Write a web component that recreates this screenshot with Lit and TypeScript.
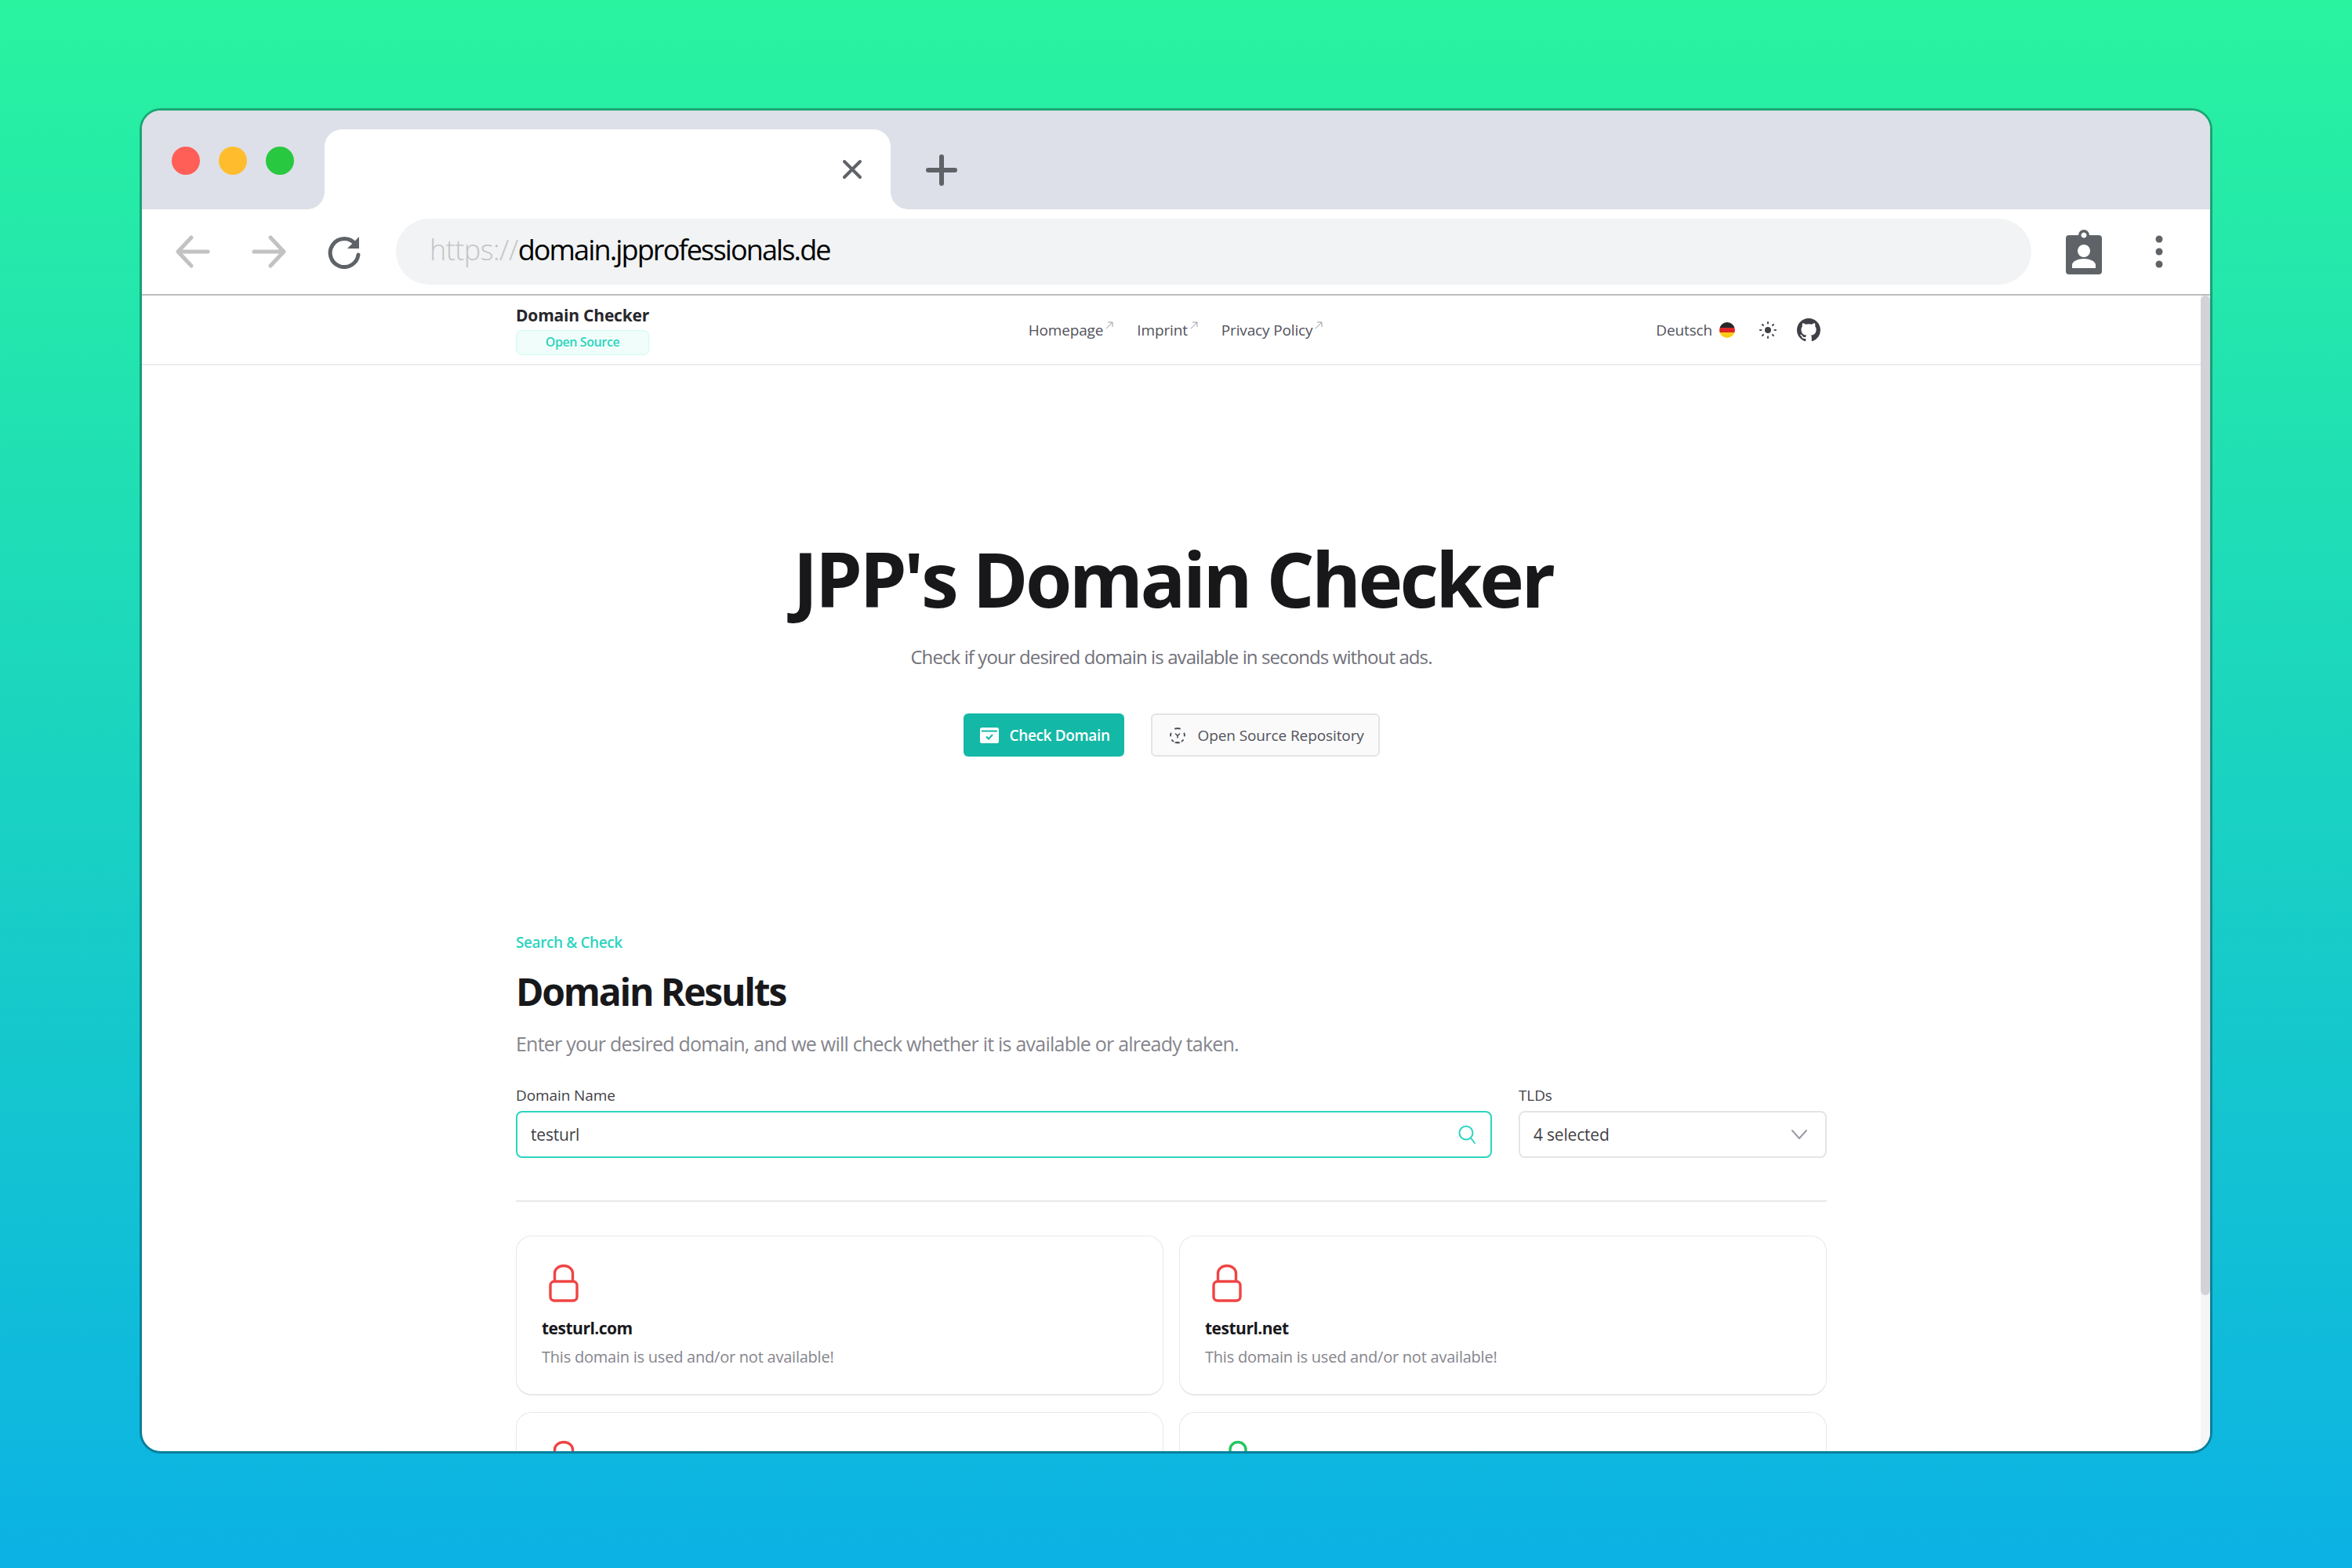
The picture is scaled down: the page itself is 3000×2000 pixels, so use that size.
import { LitElement, html, css, svg } from 'lit';
import { customElement } from 'lit/decorators.js';

const lock = (color: string, open = false) => html`
  <svg class="lock" viewBox="0 0 38 48" fill="none" stroke=${color} stroke-width="3.4">
    ${open
      ? svg`<path d="M23 22V11a10 9.500 0 0 1 20 0V14" />`
      : svg`<path d="M7.500 22V11a11.500 9.500 0 0 1 23 0V22" />`}
    <rect x="2" y="21.500" width="34" height="24.500" rx="5" />
  </svg>
`;

@customElement('domain-card')
export class DomainCard extends LitElement {
  static properties = {
    name: { type: String },
    color: { type: String },
    open: { type: Boolean },
    text: { type: String },
  };

  name = '';
  color = '#ef4444';
  open = false;
  text = '';

  static styles = css`
    :host {
      display: block;
      box-sizing: border-box;
      height: 204px;
      padding: 36px 32px 0;
      background: #fff;
      border: 1px solid #e8e8ea;
      border-bottom-width: 2px;
      border-radius: 20px;
    }
    .lock {
      display: block;
      width: 38px;
      height: 48px;
      margin-left: 9px;
      overflow: visible;
    }
    .name {
      margin-top: 18px;
      font-size: 21px;
      line-height: 30px;
      font-weight: 700;
      letter-spacing: -0.5px;
      color: #18181b;
    }
    .text {
      margin-top: 8px;
      font-size: 20px;
      line-height: 28px;
      letter-spacing: -0.23px;
      color: #85858d;
    }
  `;

  render() {
    return html`
      ${lock(this.color, this.open)}
      ${this.name
        ? html`<div class="name">${this.name}</div>
            <div class="text">${this.text}</div>`
        : ''}
    `;
  }
}

@customElement('app-root')
export class AppRoot extends LitElement {
  static styles = css`
    :host {
      display: block;
      box-sizing: border-box;
      width: 3000px;
      height: 2000px;
      padding: 138px 178px 146px;
      background: linear-gradient(180deg, #29f39f, #0bb2e4);
      font-family: 'Open Sans', 'Noto Sans', sans-serif;
    }
    .window {
      display: flex;
      flex-direction: column;
      box-sizing: border-box;
      height: 100%;
      overflow: hidden;
      background: #fff;
      border: 3px solid rgba(0, 0, 0, 0.3);
      border-radius: 27px;
      background-clip: padding-box;
    }
    .tabstrip {
      display: flex;
      align-items: flex-end;
      flex: none;
      height: 126px;
      background: #dde0e8;
    }
    .lights {
      display: flex;
      gap: 24px;
      width: 233px;
      box-sizing: border-box;
      padding: 0 0 44px 38px;
    }
    .lights i {
      width: 36px;
      height: 36px;
      border-radius: 50%;
    }
    .tab {
      position: relative;
      display: flex;
      align-items: center;
      justify-content: flex-end;
      box-sizing: border-box;
      width: 722px;
      height: 102px;
      padding: 0 34px 0 0;
      background: #fff;
      border-radius: 22px 22px 0 0;
    }
    /* concave corners where the tab meets the toolbar */
    .tab::before,
    .tab::after {
      content: '';
      position: absolute;
      bottom: 0;
      width: 22px;
      height: 22px;
    }
    .tab::before {
      left: -22px;
      background: radial-gradient(circle at 0 0, #dde0e8 21.500px, #fff 22px);
    }
    .tab::after {
      right: -22px;
      background: radial-gradient(circle at 100% 0, #dde0e8 21.500px, #fff 22px);
    }
    .tab svg {
      width: 30px;
      height: 30px;
    }
    .plus {
      width: 40px;
      height: 40px;
      margin: 0 0 30px 45px;
    }
    .toolbar {
      display: flex;
      align-items: center;
      flex: none;
      height: 110px;
      box-sizing: border-box;
      padding-left: 43px;
      border-bottom: 2px solid #bdbdbd;
    }
    .toolbar .nav {
      width: 44px;
      height: 44px;
      margin-right: 53px;
    }
    .url {
      display: flex;
      align-items: center;
      box-sizing: border-box;
      width: 2086px;
      height: 84px;
      margin-left: -10px;
      padding: 0 0 5px 43px;
      background: #f1f3f4;
      border-radius: 42px;
      font-size: 36px;
      letter-spacing: -1.86px;
      color: #000;
    }
    .url span {
      color: #c4c4c4;
      font-weight: 300;
      letter-spacing: -0.5px;
    }
    .badge-icon {
      width: 46px;
      height: 58px;
      margin-left: 44px;
    }
    .dots {
      width: 10px;
      height: 42px;
      margin-left: 68px;
    }
    .body {
      display: flex;
      flex: 1;
      min-height: 0;
    }
    .page {
      flex: 1;
      min-width: 0;
      overflow: hidden;
    }
    .scrollbar {
      flex: none;
      width: 12px;
      background: #f5f5f6;
    }
    .scrollbar i {
      display: block;
      height: 1275px;
      background: #d2d2d8;
      border-radius: 6px;
    }
    .topnav {
      box-sizing: border-box;
      height: 89px;
      border-bottom: 2px solid #ececee;
    }
    .wrap {
      width: 1672px;
      margin: 0 auto;
    }
    .topnav .wrap {
      display: grid;
      grid-template-columns: 1fr auto 1fr;
      align-items: center;
      height: 100%;
    }
    .brand {
      width: 170px;
    }
    .brand b {
      display: block;
      font-size: 21px;
      line-height: 28px;
      font-weight: 700;
      letter-spacing: -0.2px;
      white-space: nowrap;
      color: #27272a;
    }
    .brand span {
      display: block;
      height: 32px;
      box-sizing: border-box;
      margin-top: 5px;
      font-size: 16px;
      line-height: 29px;
      font-weight: 600;
      letter-spacing: -0.4px;
      text-align: center;
      color: #2dd4bf;
      background: #f0fdfa;
      border: 1.500px solid #ccfbf1;
      border-radius: 7px;
    }
    .links {
      display: flex;
      gap: 29px;
      padding-left: 12px;
      font-size: 19px;
      letter-spacing: -0.15px;
      color: #52525b;
    }
    .links span {
      display: flex;
      align-items: center;
      gap: 2px;
    }
    .links svg {
      width: 12px;
      height: 12px;
      margin-top: -12px;
    }
    .actions {
      display: flex;
      align-items: center;
      justify-content: flex-end;
      padding-right: 8px;
      font-size: 19px;
      letter-spacing: -0.15px;
      color: #52525b;
    }
    .flag {
      width: 20px;
      height: 20px;
      margin-left: 9px;
      border-radius: 50%;
      background: linear-gradient(#27272a 0 33%, #dc2626 33% 66%, #facc15 66%);
    }
    .sun {
      width: 24px;
      height: 24px;
      margin-left: 30px;
    }
    .gh {
      width: 30px;
      height: 30px;
      margin-left: 25px;
    }
    .hero {
      display: flex;
      flex-direction: column;
      align-items: center;
      padding-top: 212px;
      height: 723px;
      box-sizing: border-box;
    }
    h1 {
      margin: 0;
      padding-left: 4px;
      font-size: 96px;
      line-height: 120px;
      font-weight: 700;
      letter-spacing: -3.6px;
      color: #18181b;
    }
    .sub {
      margin-top: 23px;
      font-size: 24px;
      line-height: 34px;
      letter-spacing: -0.9px;
      color: #71717a;
    }
    .buttons {
      display: flex;
      gap: 34px;
      margin-top: 55px;
    }
    .btn {
      display: flex;
      align-items: center;
      box-sizing: border-box;
      height: 55px;
      font-size: 19px;
      font-weight: 600;
      letter-spacing: -0.35px;
      border-radius: 6px;
      white-space: nowrap;
    }
    .btn svg {
      width: 24px;
      height: 24px;
    }
    .primary {
      width: 205px;
      padding-left: 21px;
      gap: 14px;
      color: #fff;
      background: #14b8a6;
    }
    .secondary {
      width: 292px;
      padding-left: 20px;
      gap: 14px;
      font-weight: 500;
      letter-spacing: -0.1px;
      color: #52525b;
      background: #fafafa;
      border: 2px solid #e4e4e7;
    }
    .eyebrow {
      font-size: 19px;
      line-height: 26px;
      font-weight: 600;
      letter-spacing: -0.4px;
      color: #2dd4bf;
    }
    h2 {
      margin: 18px 0 0;
      font-size: 48px;
      line-height: 64px;
      font-weight: 700;
      letter-spacing: -2.2px;
      color: #18181b;
    }
    .lead {
      margin-top: 16px;
      font-size: 25px;
      line-height: 36px;
      letter-spacing: -0.77px;
      color: #85858d;
    }
    .form {
      display: grid;
      grid-template-columns: 1245px 393px;
      gap: 34px;
      margin-top: 35px;
      padding-bottom: 54px;
      border-bottom: 2px solid #e8e8ea;
    }
    label {
      display: block;
      margin-bottom: 7px;
      font-size: 19px;
      line-height: 26px;
      font-weight: 500;
      letter-spacing: -0.1px;
      color: #3f3f46;
    }
    .field {
      display: flex;
      align-items: center;
      justify-content: space-between;
      box-sizing: border-box;
      height: 60px;
      padding: 0 17px;
      font-size: 21px;
      letter-spacing: -0.2px;
      color: #3f3f46;
      border: 2px solid #e4e4e7;
      border-radius: 8px;
    }
    .field.active {
      border-color: #2dd4bf;
    }
    .field svg {
      width: 26px;
      height: 26px;
    }
    .cards {
      display: grid;
      grid-template-columns: 1fr 1fr;
      gap: 21px 20px;
      margin-top: 43px;
    }
  `;

  render() {
    const ext = html`<svg viewBox="0 0 12 12" fill="none" stroke="#9a9aa2" stroke-width="1"><path d="M2 10 10 2M4 2h6v6" /></svg>`;
    const msg = 'This domain is used and/or not available!';
    return html`
      <div class="window">
        <div class="tabstrip">
          <div class="lights">
            <i style="background:#ff5f57"></i>
            <i style="background:#ffbd2e"></i>
            <i style="background:#28c840"></i>
          </div>
          <div class="tab">
            <svg viewBox="0 0 30 30" fill="none" stroke="#5f6368" stroke-width="4" stroke-linecap="round"><path d="M5 5 25 25M25 5 5 25" /></svg>
          </div>
          <svg class="plus" viewBox="0 0 40 40" fill="none" stroke="#5f6368" stroke-width="6" stroke-linecap="round"><path d="M20 3V37M3 20H37" /></svg>
        </div>
        <div class="toolbar">
          <svg class="nav" viewBox="0 0 44 44" fill="none" stroke="#c2c2c2" stroke-width="5" stroke-linecap="round" stroke-linejoin="round"><path d="M41 22H4M20 4 3 22 20 40" /></svg>
          <svg class="nav" viewBox="0 0 44 44" fill="none" stroke="#c2c2c2" stroke-width="5" stroke-linecap="round" stroke-linejoin="round"><path d="M3 22H40M24 4 41 22 24 40" /></svg>
          <svg class="nav" viewBox="0 0 44 44" fill="none"><path d="M35 12A18 18 0 1 0 39 26" stroke="#5f6368" stroke-width="5" stroke-linecap="round" /><path d="M40 3V18H25Z" fill="#5f6368" /></svg>
          <div class="url"><span>https://</span>domain.jpprofessionals.de</div>
          <svg class="badge-icon" viewBox="0 0 46 58"><path fill="#5f6368" fill-rule="evenodd" d="M16 8a7 7 0 0 1 14 0h12a4 4 0 0 1 4 4v42a4 4 0 0 1-4 4H4a4 4 0 0 1-4-4V12a4 4 0 0 1 4-4ZM23 4.500a3.500 3.500 0 1 0 .01 0ZM23 20a8 8 0 1 0 .01 0ZM8 50h30v-4c0-5-8-8-15-8s-15 3-15 8Z" /></svg>
          <svg class="dots" viewBox="0 0 10 42" fill="#5f6368"><circle cx="5" cy="5" r="4.500" /><circle cx="5" cy="21" r="4.500" /><circle cx="5" cy="37" r="4.500" /></svg>
        </div>
        <div class="body">
          <div class="page">
            <div class="topnav">
              <div class="wrap">
                <div class="brand"><b>Domain Checker</b><span>Open Source</span></div>
                <div class="links">
                  <span>Homepage ${ext}</span>
                  <span>Imprint ${ext}</span>
                  <span>Privacy Policy ${ext}</span>
                </div>
                <div class="actions">
                  Deutsch<i class="flag"></i>
                  <svg class="sun" viewBox="0 0 24 24" fill="none" stroke="#52525b" stroke-width="2.200" stroke-linecap="round"><circle cx="12" cy="12" r="4" fill="#3f3f46" stroke="none" /><path d="M12 2v1.500M12 20.500V22M2 12h1.500M20.500 12H22M5 5l1 1M18 18l1 1M5 19l1-1M18 6l1-1" /></svg>
                  <svg class="gh" viewBox="0 0 16 16" fill="#3f3f46"><path d="M8 0C3.580 0 0 3.580 0 8c0 3.540 2.290 6.530 5.470 7.590.4.07.55-.17.55-.38 0-.19-.01-.82-.01-1.490-2.010.37-2.530-.49-2.690-.94-.09-.23-.48-.94-.82-1.130-.28-.15-.68-.52-.01-.53.63-.01 1.080.58 1.230.82.72 1.210 1.870.87 2.330.66.07-.52.28-.87.51-1.070-1.780-.2-3.640-.89-3.640-3.950 0-.87.31-1.590.82-2.150-.08-.2-.36-1.020.08-2.120 0 0 .67-.21 2.200.82.64-.18 1.320-.27 2-.27.68 0 1.360.09 2 .27 1.530-1.040 2.200-.82 2.200-.82.44 1.100.16 1.920.08 2.120.51.56.82 1.270.82 2.150 0 3.070-1.870 3.750-3.650 3.950.29.25.54.73.54 1.480 0 1.070-.01 1.930-.01 2.200 0 .21.15.46.55.38A8.013 8.013 0 0 0 16 8c0-4.420-3.580-8-8-8z" /></svg>
                </div>
              </div>
            </div>
            <div class="hero">
              <h1>JPP's Domain Checker</h1>
              <div class="sub">Check if your desired domain is available in seconds without ads.</div>
              <div class="buttons">
                <div class="btn primary">
                  <svg viewBox="0 0 24 24"><rect y="2" width="24" height="20" rx="2.500" fill="#fff" /><path d="M2 6.500H22" stroke="#14b8a6" stroke-width="2" /><path d="M8 13.500l3 3 5-5.500" fill="none" stroke="#14b8a6" stroke-width="2" /></svg>
                  Check Domain
                </div>
                <div class="btn secondary">
                  <svg viewBox="0 0 24 24" fill="none" stroke="#52525b" stroke-width="2" stroke-linecap="round"><path d="M9 3.500a9 9 0 0 1 6 0M3.500 9.500a9 9 0 0 0-.4 3M20.500 9.500a9 9 0 0 1 .4 3M5 18a9 9 0 0 0 1.500 1.500M19 18a9 9 0 0 1-1.500 1.500" /><path d="M9 21.500a9 9 0 0 0 6 0l-1-1h-4Z" fill="#52525b" stroke-width="1" /><path d="M9.500 10l2.500 2.500L14.500 10M12 12.500V15" stroke-width="1.600" /></svg>
                  Open Source Repository
                </div>
              </div>
            </div>
            <div class="wrap">
              <div class="eyebrow">Search &amp; Check</div>
              <h2>Domain Results</h2>
              <div class="lead">Enter your desired domain, and we will check whether it is available or already taken.</div>
              <div class="form">
                <div>
                  <label>Domain Name</label>
                  <div class="field active">testurl
                    <svg viewBox="0 0 26 26" fill="none" stroke="#2dd4bf" stroke-width="2" stroke-linecap="round"><circle cx="12" cy="11" r="8.500" /><path d="M18 17.500 23 24" /></svg>
                  </div>
                </div>
                <div>
                  <label>TLDs</label>
                  <div class="field">4 selected
                    <svg viewBox="0 0 26 26" fill="none" stroke="#9a9aa6" stroke-width="2" stroke-linecap="round" stroke-linejoin="round"><path d="M1 8l9 10 9-10" /></svg>
                  </div>
                </div>
              </div>
              <div class="cards">
                <domain-card name="testurl.com" text=${msg}></domain-card>
                <domain-card name="testurl.net" text=${msg}></domain-card>
                <domain-card></domain-card>
                <domain-card color="#22c55e" open></domain-card>
              </div>
            </div>
          </div>
          <div class="scrollbar"><i></i></div>
        </div>
      </div>
    `;
  }
}
